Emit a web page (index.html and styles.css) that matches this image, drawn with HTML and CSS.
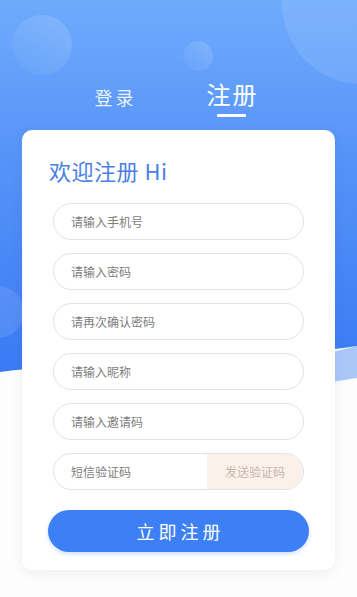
FILE: index.html
```html
<!DOCTYPE html>
<html lang="zh">
<head>
<meta charset="utf-8">
<link rel="stylesheet" href="styles.css">
</head>
<body>
<div class="page">
  <svg class="bg" width="357" height="400" viewBox="0 0 357 400">
    <defs>
      <linearGradient id="g" x1="0" y1="0" x2="0" y2="1">
        <stop offset="0" stop-color="#6eabfc"/>
        <stop offset="0.45" stop-color="#5592f8"/>
        <stop offset="1" stop-color="#3a7af4"/>
      </linearGradient>
      <linearGradient id="c1" x1="1" y1="0" x2="0" y2="1">
        <stop offset="0" stop-color="#ffffff" stop-opacity="0.16"/>
        <stop offset="1" stop-color="#ffffff" stop-opacity="0.02"/>
      </linearGradient>
    </defs>
    <path d="M357 346 L357 378 C330 382 310 386 290 388 L200 384 Z" fill="#abc7fa"/>
    <path d="M0 0 H357 V346 C250 362 100 360 0 372 Z" fill="url(#g)"/>
    <circle cx="362" cy="4" r="80" fill="#ffffff" fill-opacity="0.1"/>
    <circle cx="42" cy="45" r="30" fill="url(#c1)"/>
    <circle cx="198" cy="56" r="15" fill="url(#c1)"/>
    <circle cx="-2" cy="312" r="26" fill="#ffffff" fill-opacity="0.1"/>
  </svg>
  <div class="content">
    <div class="tabs">
      <div class="tab">登录</div>
      <div class="tab active">注册<span class="bar"></span></div>
    </div>
    <div class="card">
      <h1 class="title">欢迎注册 Hi</h1>
      <div class="fields">
        <div class="field"><span class="ph">请输入手机号</span></div>
        <div class="field"><span class="ph">请输入密码</span></div>
        <div class="field"><span class="ph">请再次确认密码</span></div>
        <div class="field"><span class="ph">请输入昵称</span></div>
        <div class="field"><span class="ph">请输入邀请码</span></div>
        <div class="field sms"><span class="ph">短信验证码</span><span class="send">发送验证码</span></div>
      </div>
      <div class="btn">立即注册</div>
    </div>
  </div>
</div>
</body>
</html>
```
FILE: styles.css
```css
* { box-sizing: border-box; margin: 0; padding: 0; }
html, body { width: 357px; height: 597px; overflow: hidden; }
body {
  font-family: "Noto Sans CJK SC", "Noto Sans", sans-serif;
  background: #ffffff;
}
.page {
  position: relative;
  width: 357px;
  height: 597px;
  overflow: hidden;
  background: #fdfdfd;
}
.bg { position: absolute; left: 0; top: 0; }
.content {
  position: relative;
  display: flex;
  flex-direction: column;
  align-items: center;
  padding-top: 79px;
}
.tabs {
  display: flex;
  align-items: flex-start;
  justify-content: center;
  gap: 70px;
  height: 51px;
  padding-right: 4px;
}
.tab {
  color: rgba(255,255,255,0.88);
  font-size: 18px;
  line-height: 30px;
  letter-spacing: 3px;
  padding-top: 3px;
}
.tab.active {
  display: flex;
  flex-direction: column;
  align-items: center;
  color: #ffffff;
  font-size: 24px;
  letter-spacing: 2px;
  padding-top: 0;
}
.bar {
  display: block;
  width: 29px;
  height: 3px;
  margin-top: 5px;
  margin-right: 2px;
  background: #ffffff;
  border-radius: 1px;
}
.card {
  width: 313px;
  background: #ffffff;
  border-radius: 10px;
  box-shadow: 0 3px 12px rgba(60, 80, 120, 0.08);
  padding: 25px 26px 18px 26px;
}
.title {
  font-weight: 400;
  font-size: 22px;
  line-height: 30px;
  color: #4a80e6;
  letter-spacing: 0.5px;
  margin-left: 1px;
}
.fields {
  display: flex;
  flex-direction: column;
  gap: 13px;
  margin: 18px 5px 0 5px;
}
.field {
  height: 37px;
  border: 1px solid #e3e3e3;
  border-radius: 19px;
  display: flex;
  align-items: center;
  padding-left: 17px;
  overflow: hidden;
}
.ph {
  font-size: 12px;
  color: #7d7d7d;
  flex: 1;
}
.send {
  flex: 0 0 96px;
  height: 100%;
  background: #fbf1eb;
  color: #c8b6ab;
  font-size: 12px;
  display: flex;
  align-items: center;
  justify-content: center;
}
.btn {
  margin-top: 20px;
  height: 42px;
  border-radius: 21px;
  background: #3d7ff4;
  color: #ffffff;
  font-size: 18px;
  letter-spacing: 4px;
  display: flex;
  align-items: center;
  justify-content: center;
  padding-left: 4px;
  box-shadow: 0 2px 4px rgba(61, 127, 244, 0.25);
}
```
